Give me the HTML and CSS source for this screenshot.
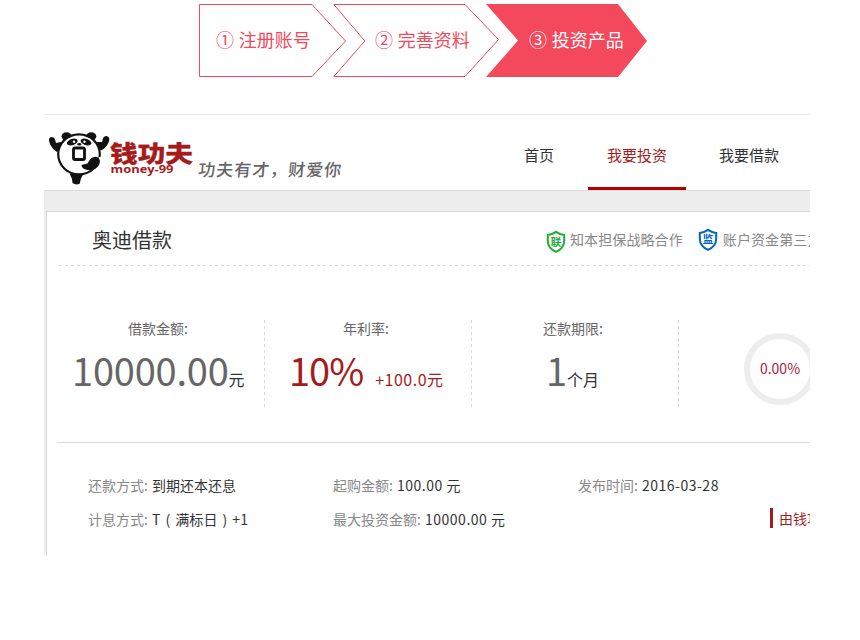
FILE: index.html
```html
<!DOCTYPE html>
<html lang="zh-CN">
<head>
<meta charset="utf-8">
<title>奥迪借款</title>
<link rel="stylesheet" href="styles.css">
</head>
<body>
<ol class="steps">
  <li class="step step-one">
    <svg class="step-shape" width="148" height="74" viewBox="0 0 148 74"><path d="M.5.5H113L146.500 37 113 72.500H.5z"/></svg>
    <span class="step-text">① 注册账号</span>
  </li>
  <li class="step step-two">
    <svg class="step-shape" width="168" height="74" viewBox="0 0 168 74"><path d="M.8.5H132L165.500 35.500 132 72.500H.8L31.800 37z"/></svg>
    <span class="step-text">② 完善资料</span>
  </li>
  <li class="step step-three">
    <svg class="step-shape" width="162" height="74" viewBox="0 0 162 74"><path d="M0 0H132L161 37 132 73H0L32 36.500z"/></svg>
    <span class="step-text">③ 投资产品</span>
  </li>
</ol>

<main class="frame">
  <header class="header">
    <svg class="logo" width="146" height="56" viewBox="0 0 146 56">
      <g fill="#111">
        <ellipse cx="18.500" cy="6.300" rx="5" ry="4"/><ellipse cx="43.300" cy="6.300" rx="5" ry="4"/>
        <path d="M1 9.500C1 6.500 5.500 6 7 9.500L8 13 12.500 12 15 13.500 9 22C4.500 19 1 14 1 9.500z"/>
        <path d="M61.300 8.500C60.500 5 56 5 55 8.500L54 12 49.500 12 47 13.500 53 20.500C58 18 61.500 13 61.300 8.500z"/>
        <path d="M21.500 43.500H35.500L32.800 49 31.800 53.500Q28 55.500 24.500 53L24 49z"/>
      </g>
      <ellipse cx="31" cy="24.300" rx="20.800" ry="20" fill="#fff" stroke="#111" stroke-width="2.200"/>
      <ellipse cx="24.300" cy="12" rx="5.600" ry="3.100" transform="rotate(-18 24.300 12)" fill="#111"/>
      <ellipse cx="38" cy="12" rx="5.600" ry="3.100" transform="rotate(18 38 12)" fill="#111"/>
      <circle cx="26" cy="11.700" r="1.200" fill="#fff"/><circle cx="36.500" cy="11.700" r="1.200" fill="#fff"/>
      <ellipse cx="31.300" cy="14.200" rx="2.200" ry="1.200" fill="#111"/>
      <rect x="25.500" y="18" width="11" height="11.500" rx="1.500" fill="none" stroke="#111" stroke-width="2.800"/>
      <path d="M52.500 27L51.500 35" stroke="#fff" stroke-width="3"/>
      <path d="M33.500 35L39.500 33.500 42 29.500C46 25 51 26 52 31C52 36 47 40.500 42 40C37 40 33.500 38 33.500 35z" fill="#111"/>
      <text class="logo-name" x="62" y="31.500" textLength="83" lengthAdjust="spacingAndGlyphs">钱功夫</text>
      <text class="logo-domain" x="62.500" y="43.300" textLength="63" lengthAdjust="spacingAndGlyphs">money-99</text>
    </svg>
    <span class="slogan">功夫有才，财爱你</span>
    <nav class="nav">
      <a class="nav-item">首页</a>
      <a class="nav-item active">我要投资</a>
      <a class="nav-item">我要借款</a>
    </nav>
  </header>

  <section class="panel">
    <div class="panel-head">
      <h1 class="title">奥迪借款</h1>
      <span class="badge green">
        <svg width="20" height="24" viewBox="0 0 20 24"><path d="M10 1.800Q14 4.500 18.200 5V11Q18 18.500 10 21.800 2 18.500 1.800 11V5Q6 4.500 10 1.800z"/><text x="10" y="15.500">联</text></svg>
        <span class="badge-text">知本担保战略合作</span>
      </span>
      <span class="badge blue">
        <svg width="20" height="24" viewBox="0 0 20 24"><path d="M10 1.800Q14 4.500 18.200 5V11Q18 18.500 10 21.800 2 18.500 1.800 11V5Q6 4.500 10 1.800z"/><text x="10" y="15">监</text></svg>
        <span class="badge-text">账户资金第三方</span>
      </span>
    </div>

    <div class="stats">
      <div class="stat amount">
        <div class="stat-label">借款金额:</div>
        <div class="stat-value"><span class="big">10000.00</span><span class="unit">元</span></div>
      </div>
      <div class="stat rate">
        <div class="stat-label">年利率:</div>
        <div class="stat-value"><span class="big">10%</span><span class="bonus">+100.0元</span></div>
      </div>
      <div class="stat term">
        <div class="stat-label">还款期限:</div>
        <div class="stat-value"><span class="big">1</span><span class="unit">个月</span></div>
      </div>
      <div class="progress">0.00%</div>
    </div>

    <div class="details">
      <div class="detail">还款方式: <b>到期还本还息</b></div>
      <div class="detail">起购金额: <b class="num">100.00 元</b></div>
      <div class="detail">发布时间: <b class="num">2016-03-28</b></div>
      <div class="detail second-row">计息方式: <b class="formula">T ( 满标日 ) +1</b></div>
      <div class="detail">最大投资金额: <b class="num">10000.00 元</b></div>
      <div class="notice">由钱功夫</div>
    </div>
  </section>
</main>
</body>
</html>
```
FILE: styles.css
```css
* { box-sizing: border-box; }

body {
  margin: 0;
  background: #fff;
  color: #333;
  font: 14px/20px "Noto Sans CJK SC", "Noto Sans", sans-serif;
}

.steps {
  display: flex;
  height: 114px;
  margin: 0;
  padding: 4px 0 0 199px;
  list-style: none;
}
.step {
  position: relative;
  flex: none;
  height: 73px;
  color: #f4495c;
  font-size: 18px;
  line-height: 70px;
  white-space: nowrap;
}
.step-one { width: 134px; padding-left: 17px; }
.step-two { width: 153px; padding-left: 42px; }
.step-three { width: 162px; padding-left: 43px; color: #fff; }
.step-shape {
  position: absolute;
  top: 0;
  left: 0;
  fill: none;
  stroke: #f4495c;
}
.step-three .step-shape { fill: #f4495c; stroke: none; }
.step-text { position: relative; word-spacing: .6px; }

.frame {
  width: 766px;
  height: 441px;
  margin-left: 44px;
  overflow: hidden;
  background: #ededed;
}

.header {
  display: flex;
  height: 77px;
  border-top: 1px solid #ebebeb;
  border-bottom: 1px solid #dcdcdc;
  background: #fff;
}
.logo { flex: none; margin: 15px 0 0 4px; }
.logo-name {
  fill: #a51c1c;
  stroke: #a51c1c;
  stroke-width: .3px;
  font-size: 23px;
  font-weight: 900;
}
.logo-domain {
  fill: #a51c1c;
  font: 700 11px "Open Sans", sans-serif;
}
.slogan {
  width: 150px;
  margin: 42px 0 0 4px;
  color: #666;
  font-size: 17px;
  font-weight: 500;
  line-height: 24px;
  letter-spacing: 1px;
  white-space: nowrap;
  transform: skewX(-5deg);
}
.nav {
  display: flex;
  gap: 15px;
  margin-left: 157px;
  font-size: 15px;
  line-height: 79px;
}
.nav-item {
  height: 75px;
  padding: 0 19px;
  white-space: nowrap;
}
.nav-item:last-child { padding-left: 18px; }
.nav-item.active {
  border-bottom: 3px solid #b00000;
  color: #a51c1c;
}

.panel {
  width: 900px;
  height: 400px;
  margin: 20px 0 0 2px;
  padding-left: 10px;
  border: 1px solid #d9d9d9;
  background: #fff;
}
.panel-head {
  display: flex;
  align-items: center;
  height: 54px;
  margin-left: 2px;
  padding: 2px 0 0 33px;
  background: repeating-linear-gradient(90deg, #d9d9d9 0 3px, transparent 3px 6px) 0 100% / 100% 1px no-repeat;
}
.title {
  width: 454px;
  margin: 0;
  font-size: 20px;
  font-weight: 400;
  line-height: 28px;
}
.badge {
  display: flex;
  align-items: center;
  gap: 4px;
  color: #888;
  white-space: nowrap;
}
.badge-text { margin-top: -2px; letter-spacing: .1px; }
.badge svg { fill: none; stroke-width: 2; }
.badge text {
  stroke: none;
  font-size: 10.5px;
  font-weight: 700;
  text-anchor: middle;
}
.green svg { margin-top: 3px; stroke: #22ac38; }
.green text { fill: #22ac38; }
.blue { gap: 5px; margin-left: 15px; }
.blue svg { stroke: #0068b7; }
.blue text { fill: #0068b7; }

.stats {
  display: flex;
  height: 177px;
  padding-top: 54px;
  border-bottom: 1px solid #d9d9d9;
}
.stat {
  width: 207px;
  height: 87px;
  background: repeating-linear-gradient(180deg, #d9d9d9 0 3px, transparent 3px 6px) 100% 0 / 1px 100% no-repeat;
}
.stat.amount { width: 208px; }
.stat-label { height: 20px; color: #666; line-height: 17px; }
.stat-value { display: flex; align-items: baseline; line-height: 59px; }
.big { color: #666; font-size: 38px; }
.unit { font-size: 16px; }
.bonus { margin-left: 12px; font-size: 16px; letter-spacing: .5px; }
.amount .stat-label { padding-left: 71px; }
.amount .stat-value { padding-left: 15px; }
.amount .big { letter-spacing: -.2px; }
.rate .stat-label { padding-left: 78px; }
.rate .stat-value { padding-left: 24px; }
.rate .stat-value, .rate .big { color: #a51c1c; }
.rate .big { letter-spacing: -1px; }
.term .stat-label { padding-left: 71px; }
.term .stat-value { padding-left: 74px; }
.progress {
  width: 72px;
  height: 72px;
  margin: 13px 0 0 65px;
  border: 6px solid #ededed;
  border-radius: 50%;
  color: #a51c3c;
  line-height: 59px;
  text-align: center;
}

.details {
  display: grid;
  grid-template-columns: 245px 245px 192px 100px;
  grid-template-rows: 34px 34px;
  padding: 25px 0 0 31px;
}
.detail {
  color: #888;
  line-height: 34px;
  white-space: nowrap;
}
.detail b { margin-left: 1px; color: #333; font-weight: 400; }
.detail .num { letter-spacing: .5px; }
.detail .formula { word-spacing: 1.6px; letter-spacing: .15px; }
.second-row { grid-column: 1; }
.notice {
  grid-column: 4;
  height: 20px;
  margin-top: 6px;
  padding-left: 6px;
  border-left: 3px solid #a51c1c;
  color: #a51c1c;
  line-height: 21px;
}
```
